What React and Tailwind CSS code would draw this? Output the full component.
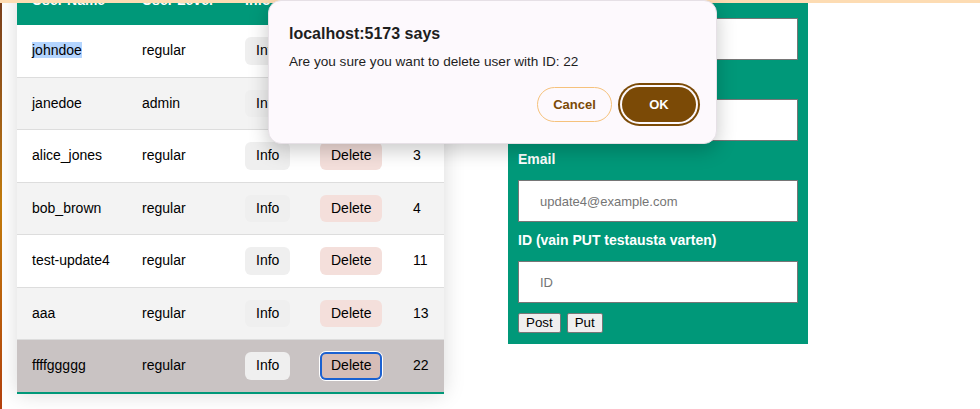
import React from "react";

const users = [
  { id: 1, name: "johndoe", level: "regular" },
  { id: 2, name: "janedoe", level: "admin" },
  { id: 3, name: "alice_jones", level: "regular" },
  { id: 4, name: "bob_brown", level: "regular" },
  { id: 11, name: "test-update4", level: "regular" },
  { id: 13, name: "aaa", level: "regular" },
  { id: 22, name: "ffffggggg", level: "regular" },
];

function Field({ label, placeholder }) {
  return (
    <div>
      <label className="block mt-[10px] mb-[12px] text-[14px] leading-[17px] font-bold text-white">
        {label}
      </label>
      <input
        className="block w-[280px] h-[42px] bg-white border border-[#767676] px-[21px] text-[13px] text-black placeholder:text-[#757575] outline-none"
        placeholder={placeholder}
      />
    </div>
  );
}

export default function App() {
  return (
    <div className="relative w-[980px] h-[409px] overflow-hidden bg-white font-['Liberation_Sans',Arial,sans-serif] text-black">
      {/* top strip */}
      <div className="absolute top-0 left-0 right-0 h-[3px] bg-[#fddcb3] z-10" />

      <div className="flex h-full">
        {/* left window edge */}
        <div className="w-[2px] shrink-0 bg-gradient-to-b from-[#7a3f1c] via-[#c47d0d] to-[#b3400d]" />

        <div className="flex items-start -mt-[25px] ml-[15px]">
          {/* USERS TABLE */}
          <table className="table-fixed border-collapse w-[427px] text-[14px] shadow-[0_0_20px_rgba(0,0,0,0.15)]">
            <colgroup>
              <col className="w-[110px]" />
              <col className="w-[103px]" />
              <col className="w-[75px]" />
              <col className="w-[93px]" />
              <col className="w-[46px]" />
            </colgroup>
            <thead>
              <tr className="bg-[#009879] text-white text-left">
                <th className="h-[50px] px-[15px] font-bold">User Name</th>
                <th className="h-[50px] px-[15px] font-bold">User Level</th>
                <th className="h-[50px] px-[15px] font-bold">Info</th>
                <th className="h-[50px] px-[15px] font-bold">Delete</th>
                <th className="h-[50px] px-[15px] font-bold">ID</th>
              </tr>
            </thead>
            <tbody>
              {users.map((u, i) => {
                const last = i === users.length - 1;
                const bg = last ? "bg-[#c9c3c3]" : i % 2 === 1 ? "bg-[#f3f3f3]" : "bg-white";
                return (
                  <tr
                    key={u.id}
                    className={`${bg} ${last ? "border-b-2 border-[#009879]" : "border-b border-[#dddddd]"}`}
                  >
                    <td className="px-[15px] py-[12px]">
                      {i === 0 ? <span className="bg-[#b4d5fe]">{u.name}</span> : u.name}
                    </td>
                    <td className="px-[15px] py-[12px]">{u.level}</td>
                    <td className="px-[15px] py-[12px]">
                      <button className="px-[11px] py-[5px] leading-[17.5px] rounded-[6px] bg-[#efefef]">
                        Info
                      </button>
                    </td>
                    <td className="px-[15px] py-[12px]">
                      <button
                        className={`px-[11px] py-[5px] leading-[17.5px] rounded-[6px] ${
                          last
                            ? "bg-[#d6bdb7] shadow-[inset_0_0_0_2px_#1b61d1,0_0_0_1px_#ffffff]"
                            : "bg-[#f4dfdb]"
                        }`}
                      >
                        Delete
                      </button>
                    </td>
                    <td className="px-[15px] py-[12px]">{u.id}</td>
                  </tr>
                );
              })}
            </tbody>
          </table>

          {/* USER FORM */}
          <div className="ml-[64px] w-[300px] bg-[#009879] px-[10px] pt-[4px] pb-[11px]">
            <Field label="Username" placeholder="Username" />
            <Field label="Password" placeholder="Password" />
            <Field label="Email" placeholder="update4@example.com" />
            <Field label="ID (vain PUT testausta varten)" placeholder="ID" />
            <div className="flex gap-[6px] mt-[10px]">
              <button className="px-[7px] py-[1px] text-[13.33px] leading-[16px] bg-[#efefef] border border-[#767676] rounded-[2px]">
                Post
              </button>
              <button className="px-[7px] py-[1px] text-[13.33px] leading-[16px] bg-[#efefef] border border-[#767676] rounded-[2px]">
                Put
              </button>
            </div>
          </div>
        </div>
      </div>

      {/* CONFIRM DIALOG */}
      <div className="absolute left-[268px] top-0 z-20 w-[449px] h-[144px] rounded-[13px] bg-[#fdf9fd] border border-[#e6e0e6] shadow-[0_6px_20px_rgba(0,0,0,0.22)] pt-[23px] pl-[20px] pr-[20px]">
        <div className="text-[16px] leading-[19px] font-bold text-[#1e1e1e]">localhost:5173 says</div>
        <div className="mt-[11px] text-[13.6px] leading-[16px] text-[#1e1e1e]">
          Are you sure you want to delete user with ID: 22
        </div>
        <div className="flex justify-end gap-[10px] mt-[17px]">
          <button className="w-[75px] h-[35px] rounded-full border border-[#f6c27c] text-[13px] font-bold text-[#7b4a06]">
            Cancel
          </button>
          <button className="w-[74px] h-[35px] rounded-full bg-[#7b4a06] text-[13px] font-bold text-white shadow-[0_0_0_2px_#fdf9fd,0_0_0_4px_#7b4a06]">
            OK
          </button>
        </div>
      </div>
    </div>
  );
}
